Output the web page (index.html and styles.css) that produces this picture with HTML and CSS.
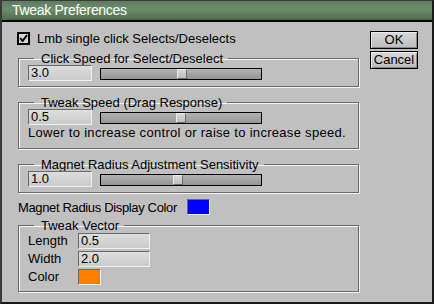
FILE: index.html
```html
<!DOCTYPE html>
<html>
<head>
<meta charset="utf-8">
<link rel="stylesheet" href="styles.css">
</head>
<body>
<div class="window">
  <div class="titlebar">Tweak Preferences</div>
  <div class="content">
    <div class="main">
      <label class="check-row">
        <span class="checkbox"><svg width="9" height="9" viewBox="0 0 9 9"><path d="M1.2 4.2 L3.6 7 L8 1.2" fill="none" stroke="#000" stroke-width="2"/></svg></span>
        <span>Lmb single click Selects/Deselects</span>
      </label>

      <fieldset class="group">
        <legend>Click Speed for Select/Deselect</legend>
        <div class="value-row">
          <div class="field">3.0</div>
          <div class="slider"><div class="thumb" style="left:76px"></div></div>
        </div>
      </fieldset>

      <fieldset class="group">
        <legend>Tweak Speed (Drag Response)</legend>
        <div class="value-row">
          <div class="field">0.5</div>
          <div class="slider"><div class="thumb" style="left:75px"></div></div>
        </div>
        <p class="hint">Lower to increase control or raise to increase speed.</p>
      </fieldset>

      <fieldset class="group">
        <legend>Magnet Radius Adjustment Sensitivity</legend>
        <div class="value-row">
          <div class="field">1.0</div>
          <div class="slider"><div class="thumb" style="left:72px"></div></div>
        </div>
      </fieldset>

      <div class="color-row">
        <span class="color-label">Magnet Radius Display Color</span>
        <span class="swatch swatch-blue"></span>
      </div>

      <fieldset class="group vector">
        <legend>Tweak Vector</legend>
        <div class="vector-grid">
          <span class="vlabel">Length</span><div class="field wide">0.5</div>
          <span class="vlabel">Width</span><div class="field wide">2.0</div>
          <span class="vlabel">Color</span><span class="swatch swatch-orange"></span>
        </div>
      </fieldset>
    </div>
    <div class="buttons">
      <button class="btn">OK</button>
      <button class="btn">Cancel</button>
    </div>
  </div>
</div>
</body>
</html>
```

FILE: styles.css
```css
html, body {
  margin: 0;
  padding: 0;
  background: #c0c0c0;
}

.window {
  box-sizing: border-box;
  width: 434px;
  height: 304px;
  border: 2px solid #1a1a1a;
  border-top-width: 1px;
  border-left-color: #3a3a3a;
  border-top-color: #3a3a3a;
  background: #c0c0c0;
  font-family: "Liberation Sans", Arial, sans-serif;
  font-size: 13px;
  color: #000;
  display: flex;
  flex-direction: column;
}

.titlebar {
  height: 19px;
  line-height: 19px;
  border-bottom: 2px solid #000;
  background: linear-gradient(#5e7d5e, #6d8e6d 45%, #4c6b4c);
  color: #fff;
  font-size: 14px;
  letter-spacing: -0.3px;
  padding-left: 10px;
}

.content {
  display: flex;
  padding: 9px 0 0 16px;
}

.main {
  width: 341px;
  display: flex;
  flex-direction: column;
}

.check-row {
  display: flex;
  align-items: center;
  gap: 7px;
  height: 15px;
  line-height: 15px;
  margin: 0 0 0 -1px;
}

.checkbox {
  box-sizing: border-box;
  width: 13px;
  height: 13px;
  border: 2px solid #000;
  background: #d4d4d4;
  display: flex;
}

.group {
  margin: 6px 0 0 0;
  padding: 0 9px 5px 9px;
  border: 1px solid #6a6a6a;
  box-shadow: inset 1px 1px 0 #f4f4f4, 1px 1px 0 #f4f4f4;
  width: 341px;
  box-sizing: border-box;
  min-width: 0;
}

.group + .group {
  margin-top: 9px;
}

.group legend {
  padding: 0 5px 0 7px;
  margin-left: 6px;
  line-height: 13px;
  height: 13px;
}

.value-row {
  display: flex;
  align-items: center;
  gap: 8px;
}

.field {
  box-sizing: border-box;
  width: 64px;
  height: 16px;
  line-height: 14px;
  padding-left: 2px;
  border: 1px solid;
  border-color: #6a6a6a #f0f0f0 #f0f0f0 #6a6a6a;
  background: linear-gradient(#dedede, #cacaca);
}

.field.wide {
  width: 72px;
}

.slider {
  position: relative;
  box-sizing: border-box;
  width: 162px;
  height: 12px;
  margin-top: 2px;
  border: 1px solid #000;
  background: linear-gradient(#b2b2b2, #969696);
}

.thumb {
  position: absolute;
  top: 0;
  box-sizing: border-box;
  width: 10px;
  height: 10px;
  border: 1px solid;
  border-color: #ececec #6a6a6a #6a6a6a #ececec;
  background: linear-gradient(#d6d6d6, #c0c0c0);
}

.hint {
  margin: 1px 0 4px 0;
  line-height: 13px;
  letter-spacing: 0.3px;
}

.color-row {
  display: flex;
  align-items: center;
  gap: 10px;
  height: 16px;
  margin-top: 6px;
}

.color-label {
  letter-spacing: -0.35px;
}

.swatch {
  box-sizing: border-box;
  display: block;
  width: 23px;
  height: 16px;
  border: 1px solid;
  border-color: #6a6a6a #f0f0f0 #f0f0f0 #6a6a6a;
}

.swatch-blue {
  background: #0000ff;
}

.swatch-orange {
  background: #ff8000;
}

.group.vector {
  margin-top: 4px;
  padding-top: 1px;
  padding-bottom: 6px;
}

.vector-grid {
  display: grid;
  grid-template-columns: 50px auto;
  grid-auto-rows: 16px;
  row-gap: 2px;
  align-items: center;
  justify-items: start;
  line-height: 16px;
}

.buttons {
  display: flex;
  flex-direction: column;
  gap: 2px;
  margin-left: 11px;
}

.btn {
  box-sizing: border-box;
  width: 48px;
  height: 18px;
  padding: 0;
  border: 1px solid #000;
  box-shadow: inset 1px 1px 0 #ececec, inset -1px -1px 0 #8a8a8a;
  background: linear-gradient(#d8d8d8, #bcbcbc);
  font-family: "Liberation Sans", Arial, sans-serif;
  font-size: 13px;
  line-height: 16px;
  color: #000;
}
```
